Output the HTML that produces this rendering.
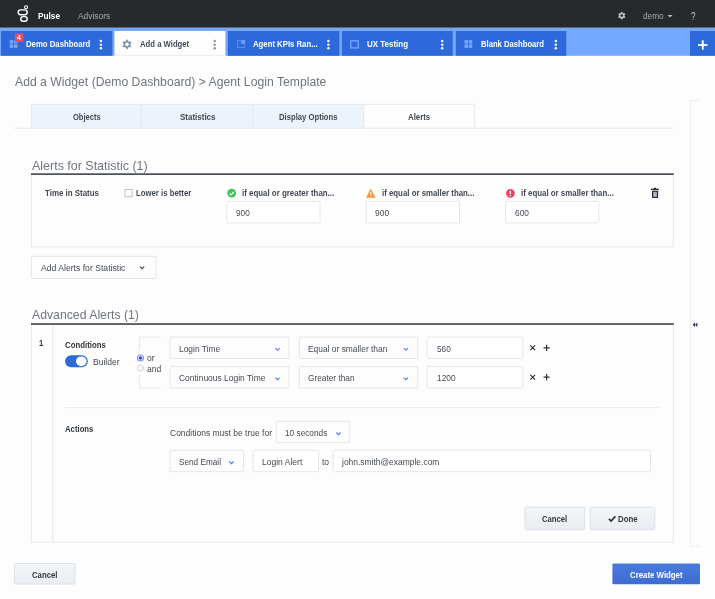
<!DOCTYPE html>
<html>
<head>
<meta charset="utf-8">
<title>Pulse - Add a Widget</title>
<style>
*{box-sizing:border-box;margin:0;padding:0}
html,body{width:715px;height:599px;overflow:hidden;background:#fdfdfd;font-family:"Liberation Sans",sans-serif;color:#444a52;font-size:9.2px}
#pg{position:absolute;left:-8px;top:-8px;width:731px;height:615px;overflow:hidden;background:#fdfdfd;filter:blur(0.45px)}
#in{position:absolute;left:8px;top:8px;width:715px;height:599px}
#shapes{position:absolute;left:0;top:0;width:715px;height:599px;overflow:visible}
.t{position:absolute;white-space:nowrap;transform-origin:0 50%}
</style>
</head>
<body>
<div id="pg"><div id="in">
<svg id="shapes" width="715" height="599" viewBox="0 0 715 599">
  <defs>
    <g id="kebab"><circle cx="0" cy="0" r="1.25"/><circle cx="0" cy="3.6" r="1.25"/><circle cx="0" cy="7.2" r="1.25"/></g>
    <path id="chev" d="M0.4 0.2L2.5 2.3L4.6 0.2" fill="none" stroke-width="1.1"/>
    <g id="grid"><rect x="0" y="0" width="3.5" height="3.5"/><rect x="4.3" y="0" width="3.5" height="3.5"/><rect x="0" y="4.3" width="3.5" height="3.5"/><rect x="4.3" y="4.3" width="3.5" height="3.5"/></g>
    <linearGradient id="cw" x1="0" y1="0" x2="0" y2="1"><stop offset="0" stop-color="#4a7ade"/><stop offset="1" stop-color="#3d6cd2"/></linearGradient>
    <linearGradient id="bt" x1="0" y1="0" x2="0" y2="1"><stop offset="0" stop-color="#f3f5f8"/><stop offset="1" stop-color="#e9edf1"/></linearGradient>
  </defs>

  <!-- top nav -->
  <rect x="-8" y="-8" width="731" height="35.8" fill="#262a2d"/>
  <g fill="none" stroke="#ffffff" stroke-width="1.45">
    <rect x="18.2" y="9.85" width="9.0" height="4.8" rx="2.4"/>
    <rect x="20.8" y="16.6" width="6.4" height="4.6" rx="2.3"/>
    <circle cx="26.1" cy="7.2" r="1.5" stroke-width="1.1"/>
  </g>
  <!-- gear -->
  <g transform="translate(621.8 15.6)">
    <polygon points="0.00,-3.85 1.20,-2.08 3.33,-1.92 2.40,0.00 3.33,1.92 1.20,2.08 0.00,3.85 -1.20,2.08 -3.33,1.92 -2.40,0.00 -3.33,-1.93 -1.20,-2.08" fill="#c3d0e2" stroke="#c3d0e2" stroke-width="0.4" stroke-linejoin="round"/>
    <circle r="1.35" fill="#262a2d"/>
  </g>
  <path d="M667.4 15.1h5.2l-2.6 2.5z" fill="#b4bac0"/>

  <!-- dashboard tab bar -->
  <rect x="-8" y="27.8" width="731" height="28" fill="#75a8ff"/>
  <g fill="#2e69db">
    <rect x="1" y="31" width="111.4" height="24.8"/>
    <rect x="227.8" y="31" width="111.6" height="24.8"/>
    <rect x="341.9" y="31" width="110.8" height="24.8"/>
    <rect x="455.8" y="31" width="110.5" height="24.8"/>
    <rect x="690" y="31" width="33" height="24.8"/>
  </g>
  <rect x="114.4" y="31" width="111" height="24.8" fill="#fdfdfd"/>
  <rect x="114.4" y="54.8" width="111" height="1" fill="#eef0f4"/>
  <!-- plus -->
  <rect x="698" y="44.1" width="9.5" height="1.8" fill="#fff"/>
  <rect x="701.85" y="40.3" width="1.8" height="9.4" fill="#fff"/>
  <!-- tab icons -->
  <use href="#grid" x="9.65" y="40.05" fill="#75a6ff"/>
  <rect x="14.85" y="33.4" width="8.5" height="8.55" fill="#f04a5e"/>
  <use href="#grid" x="464.5" y="40.1" fill="#75a6ff"/>
  <path d="M241 40.5H237.5V47.4H244.7V44.2" fill="none" stroke="#5389f4" stroke-width="1.1"/>
  <rect x="241.2" y="40.1" width="3.9" height="3.7" fill="#6fa1ff"/>
  <rect x="350.7" y="40.8" width="7.6" height="7.1" fill="none" stroke="#6fa1ff" stroke-width="1.4"/>
  <!-- active tab gear -->
  <g transform="translate(127 44.4)">
    <polygon points="0.00,-4.90 1.48,-2.55 4.24,-2.45 2.95,0.00 4.24,2.45 1.48,2.55 0.00,4.90 -1.47,2.55 -4.24,2.45 -2.95,0.00 -4.24,-2.45 -1.48,-2.55" fill="#7b90af" stroke="#7b90af" stroke-width="0.5" stroke-linejoin="round"/>
    <circle r="1.8" fill="#fdfdfd"/>
  </g>
  <!-- kebabs -->
  <use href="#kebab" x="100.9" y="41.1" fill="#fff"/>
  <use href="#kebab" x="214.7" y="41.1" fill="#8d96a0"/>
  <use href="#kebab" x="328.4" y="41.1" fill="#fff"/>
  <use href="#kebab" x="442.2" y="41.1" fill="#fff"/>
  <use href="#kebab" x="555.8" y="41.1" fill="#fff"/>

  <!-- wizard tabs -->
  <rect x="31.4" y="104.3" width="332.2" height="23.9" fill="#edf3fb"/>
  <g fill="none" stroke="#e3e8f1" stroke-width="1">
    <path d="M14.5 128.2H673"/>
    <path d="M31.4 128.2V104.3H474.7V128.2"/>
    <path d="M141.5 104.3V128.2M252.7 104.3V128.2M363.6 104.3V128.2"/>
  </g>

  <!-- right collapsed panel -->
  <path d="M699.8 100.5H690.4V546.2H699.8" fill="none" stroke="#ebeef4" stroke-width="1"/>
  <path d="M695.0 322.6v4.5l-2.3-2.25zM697.4 322.6v4.5l-2.3-2.25z" fill="#2a3050"/>

  <!-- Alerts for statistic box -->
  <rect x="31.3" y="174" width="642" height="72.8" fill="none" stroke="#e4e8ef" stroke-width="1"/>
  <rect x="31" y="173.3" width="642.8" height="1.7" fill="#4b5057"/>
  <rect x="125" y="189.5" width="7.2" height="7.2" fill="#fff" stroke="#b9bec6" stroke-width="0.9"/>
  <g fill="#fff" stroke="#e1e6ee" stroke-width="1">
    <rect x="226.9" y="201.4" width="93.1" height="21.5" rx="1"/>
    <rect x="366.3" y="201.4" width="93.2" height="21.5" rx="1"/>
    <rect x="505.6" y="201.4" width="93.2" height="21.5" rx="1"/>
  </g>
  <!-- status icons -->
  <circle cx="231.7" cy="193.2" r="4.4" fill="#40c35b"/>
  <path d="M229.6 193.6l1.4 1.3 2.8-2.9" fill="none" stroke="#fff" stroke-width="1.1"/>
  <path d="M370.8 189.3l4.3 8.1h-8.6z" fill="#f99a38" stroke="#f99a38" stroke-width="0.7" stroke-linejoin="round"/>
  <rect x="370.2" y="191.9" width="1.2" height="2.5" fill="#fff"/><rect x="370.2" y="195.1" width="1.2" height="1.1" fill="#fff"/>
  <circle cx="510.4" cy="193.3" r="4.35" fill="#ea4466"/>
  <rect x="509.7" y="190.6" width="1.25" height="3.3" fill="#fff"/><rect x="509.7" y="194.8" width="1.25" height="1.25" fill="#fff"/>
  <!-- trash -->
  <g fill="#2b2d36">
    <rect x="651" y="188.7" width="7.9" height="1.4"/>
    <rect x="653.7" y="187.8" width="2.5" height="1.2" rx="0.4"/>
    <rect x="652" y="190.8" width="6.1" height="7.2" rx="0.5"/>
  </g>
  <rect x="653.2" y="191.9" width="3.7" height="5.0" fill="#b9a9c0"/>

  <!-- add alerts dropdown -->
  <rect x="31.3" y="256.3" width="124.7" height="22.2" rx="1" fill="#fdfdfd" stroke="#e1e6ee" stroke-width="1"/>
  <use href="#chev" x="139.6" y="266.4" stroke="#444a52"/>

  <!-- Advanced Alerts box -->
  <rect x="31.3" y="324" width="642" height="218.1" fill="none" stroke="#e4e8ef" stroke-width="1"/>
  <path d="M52.7 324V542" stroke="#e4e8ef" stroke-width="1"/>
  <rect x="31" y="323.2" width="642.8" height="1.7" fill="#4b5057"/>
  <!-- toggle -->
  <rect x="65.1" y="355.2" width="22.7" height="12" rx="6" fill="#2e69db"/>
  <ellipse cx="81.3" cy="361.3" rx="5.3" ry="4.85" fill="#fff"/>
  <!-- or / and -->
  <path d="M161 337.1H139.6V388H161" fill="none" stroke="#e4e8ef" stroke-width="1"/>
  <rect x="136" y="350.6" width="8" height="24.4" fill="#fdfdfd"/>
  <circle cx="140.5" cy="358.0" r="3.0" fill="#fff" stroke="#8794ee" stroke-width="1.1"/>
  <circle cx="140.5" cy="358.0" r="1.75" fill="#2b50e0"/>
  <circle cx="140.5" cy="368.25" r="3.0" fill="#fff" stroke="#c3c8d0" stroke-width="0.9"/>
  <!-- selects / inputs -->
  <g fill="#fdfdfd" stroke="#e1e6ee" stroke-width="1">
    <rect x="170" y="337.1" width="119" height="21.4" rx="1"/>
    <rect x="299.3" y="337.1" width="118.4" height="21.4" rx="1"/>
    <rect x="170" y="366.6" width="119" height="21.4" rx="1"/>
    <rect x="299.3" y="366.6" width="118.4" height="21.4" rx="1"/>
    <rect x="276.3" y="421.3" width="73.4" height="21.4" rx="1"/>
    <rect x="170" y="450.3" width="73.6" height="21.4" rx="1"/>
  </g>
  <g fill="#fff" stroke="#e1e6ee" stroke-width="1">
    <rect x="427" y="337.1" width="95.8" height="21.4" rx="1"/>
    <rect x="427" y="366.6" width="95.8" height="21.4" rx="1"/>
    <rect x="253.2" y="450.3" width="65.5" height="21.4" rx="1"/>
    <rect x="333.2" y="450.3" width="317.3" height="21.4" rx="1"/>
  </g>
  <g stroke="#4f78e6">
    <use href="#chev" x="275" y="348"/>
    <use href="#chev" x="403.4" y="348"/>
    <use href="#chev" x="275" y="377.4"/>
    <use href="#chev" x="403.4" y="377.4"/>
    <use href="#chev" x="336" y="432.3"/>
    <use href="#chev" x="229" y="461.3"/>
  </g>
  <!-- x and + -->
  <g stroke="#2e3237" stroke-width="1.2" fill="none">
    <path d="M530.3 345.4l4.8 4.8M535.1 345.4l-4.8 4.8"/>
    <path d="M543.5 347.8h6.2M546.6 344.7v6.2"/>
    <path d="M530.3 374.8l4.8 4.8M535.1 374.8l-4.8 4.8"/>
    <path d="M543.5 377.2h6.2M546.6 374.1v6.2"/>
  </g>
  <path d="M65.1 407.6H659" stroke="#e9ecf1" stroke-width="1"/>
  <!-- buttons -->
  <g fill="url(#bt)" stroke="#dce2e9" stroke-width="1">
    <rect x="525" y="507.1" width="59.8" height="22.6" rx="1.2"/>
    <rect x="590.2" y="507.1" width="64.6" height="22.6" rx="1.2"/>
    <rect x="14.4" y="563.5" width="60.6" height="20.6" rx="1.2"/>
  </g>
  <path d="M608.9 518.9l2.2 2.2 4.3-4.7" fill="none" stroke="#2e3237" stroke-width="1.7"/>
  <rect x="612.4" y="563.5" width="87.6" height="20.8" rx="1.2" fill="url(#cw)"/>
</svg>
<div class="t" style="left:17.1px;top:34px;font-size:6.8px;line-height:8px;color:#fff;font-weight:bold">4</div>
<div class="t" style="left:38.0px;top:10px;font-size:9.2px;line-height:12px;color:#ffffff;transform:scaleX(0.8974);font-weight:bold">Pulse</div>
<div class="t" style="left:78.0px;top:10px;font-size:9.2px;line-height:12px;color:#a3a9af;transform:scaleX(0.9139)">Advisors</div>
<div class="t" style="left:642.8px;top:10px;font-size:9.2px;line-height:12px;color:#a3a9af;transform:scaleX(0.9006)">demo</div>
<div class="t" style="left:691.4px;top:9px;font-size:10.6px;line-height:14px;color:#c6cbd0;transform:scaleX(0.7619)">?</div>
<div class="t" style="left:26.0px;top:38px;font-size:9.2px;line-height:12px;color:#ffffff;transform:scaleX(0.8452);font-weight:bold">Demo Dashboard</div>
<div class="t" style="left:139.7px;top:38px;font-size:9.2px;line-height:12px;color:#444a52;transform:scaleX(0.8392);font-weight:bold">Add a Widget</div>
<div class="t" style="left:253.4px;top:38px;font-size:9.2px;line-height:12px;color:#ffffff;transform:scaleX(0.8436);font-weight:bold">Agent KPIs Ran...</div>
<div class="t" style="left:367.0px;top:38px;font-size:9.2px;line-height:12px;color:#ffffff;transform:scaleX(0.8687);font-weight:bold">UX Testing</div>
<div class="t" style="left:481.0px;top:38px;font-size:9.2px;line-height:12px;color:#ffffff;transform:scaleX(0.8337);font-weight:bold">Blank Dashboard</div>
<div class="t" style="left:14.8px;top:73px;font-size:13.0px;line-height:17px;color:#70767d;transform:scaleX(0.9384)">Add a Widget (Demo Dashboard) &gt; Agent Login Template</div>
<div class="t" style="left:73.0px;top:111px;font-size:9.2px;line-height:12px;color:#444a52;transform:scaleX(0.8219);font-weight:bold">Objects</div>
<div class="t" style="left:179.6px;top:111px;font-size:9.2px;line-height:12px;color:#444a52;transform:scaleX(0.8688);font-weight:bold">Statistics</div>
<div class="t" style="left:279.0px;top:111px;font-size:9.2px;line-height:12px;color:#444a52;transform:scaleX(0.8363);font-weight:bold">Display Options</div>
<div class="t" style="left:408.4px;top:111px;font-size:9.2px;line-height:12px;color:#444a52;transform:scaleX(0.8523);font-weight:bold">Alerts</div>
<div class="t" style="left:31.5px;top:157px;font-size:13.0px;line-height:17px;color:#70767d;transform:scaleX(0.9590)">Alerts for Statistic (1)</div>
<div class="t" style="left:44.6px;top:187px;font-size:9.2px;line-height:12px;color:#444a52;transform:scaleX(0.8621);font-weight:bold">Time in Status</div>
<div class="t" style="left:136.0px;top:187px;font-size:9.2px;line-height:12px;color:#444a52;transform:scaleX(0.8461);font-weight:bold">Lower is better</div>
<div class="t" style="left:242.0px;top:187px;font-size:9.2px;line-height:12px;color:#444a52;transform:scaleX(0.8599);font-weight:bold">if equal or greater than...</div>
<div class="t" style="left:381.7px;top:187px;font-size:9.2px;line-height:12px;color:#444a52;transform:scaleX(0.8536);font-weight:bold">if equal or smaller than...</div>
<div class="t" style="left:521.0px;top:187px;font-size:9.2px;line-height:12px;color:#444a52;transform:scaleX(0.8582);font-weight:bold">if equal or smaller than...</div>
<div class="t" style="left:236.0px;top:207px;font-size:9.2px;line-height:12px;color:#444a52;transform:scaleX(0.8994)">900</div>
<div class="t" style="left:375.2px;top:207px;font-size:9.2px;line-height:12px;color:#444a52;transform:scaleX(0.9189)">900</div>
<div class="t" style="left:514.6px;top:207px;font-size:9.2px;line-height:12px;color:#444a52;transform:scaleX(0.9059)">600</div>
<div class="t" style="left:40.6px;top:262px;font-size:9.2px;line-height:12px;color:#444a52;transform:scaleX(0.9391)">Add Alerts for Statistic</div>
<div class="t" style="left:31.5px;top:306px;font-size:13.0px;line-height:17px;color:#70767d;transform:scaleX(0.9422)">Advanced Alerts (1)</div>
<div class="t" style="left:39.0px;top:337px;font-size:9.2px;line-height:12px;color:#33383d;transform:scaleX(0.8390);font-weight:bold">1</div>
<div class="t" style="left:65.3px;top:339px;font-size:9.2px;line-height:12px;color:#33383d;transform:scaleX(0.8503);font-weight:bold">Conditions</div>
<div class="t" style="left:93.0px;top:356px;font-size:9.2px;line-height:12px;color:#444a52;transform:scaleX(0.9263)">Builder</div>
<div class="t" style="left:147.0px;top:352px;font-size:9.2px;line-height:12px;color:#444a52;transform:scaleX(0.9300)">or</div>
<div class="t" style="left:147.0px;top:363px;font-size:9.2px;line-height:12px;color:#444a52;transform:scaleX(0.9255)">and</div>
<div class="t" style="left:179.4px;top:343px;font-size:9.2px;line-height:12px;color:#444a52;transform:scaleX(0.9143)">Login Time</div>
<div class="t" style="left:307.6px;top:343px;font-size:9.2px;line-height:12px;color:#444a52;transform:scaleX(0.9145)">Equal or smaller than</div>
<div class="t" style="left:436.9px;top:343px;font-size:9.2px;line-height:12px;color:#444a52;transform:scaleX(0.8994)">560</div>
<div class="t" style="left:178.9px;top:372px;font-size:9.2px;line-height:12px;color:#444a52;transform:scaleX(0.9193)">Continuous Login Time</div>
<div class="t" style="left:307.6px;top:372px;font-size:9.2px;line-height:12px;color:#444a52;transform:scaleX(0.9032)">Greater than</div>
<div class="t" style="left:436.9px;top:372px;font-size:9.2px;line-height:12px;color:#444a52;transform:scaleX(0.9094)">1200</div>
<div class="t" style="left:65.1px;top:423px;font-size:9.2px;line-height:12px;color:#33383d;transform:scaleX(0.8427);font-weight:bold">Actions</div>
<div class="t" style="left:170.0px;top:427px;font-size:9.2px;line-height:12px;color:#444a52;transform:scaleX(0.9246)">Conditions must be true for</div>
<div class="t" style="left:285.2px;top:427px;font-size:9.2px;line-height:12px;color:#444a52;transform:scaleX(0.9000)">10 seconds</div>
<div class="t" style="left:178.9px;top:456px;font-size:9.2px;line-height:12px;color:#444a52;transform:scaleX(0.8939)">Send Email</div>
<div class="t" style="left:262.0px;top:456px;font-size:9.2px;line-height:12px;color:#444a52;transform:scaleX(0.9281)">Login Alert</div>
<div class="t" style="left:322.4px;top:456px;font-size:9.2px;line-height:12px;color:#444a52;transform:scaleX(0.9255)">to</div>
<div class="t" style="left:342.2px;top:456px;font-size:9.2px;line-height:12px;color:#444a52;transform:scaleX(0.9202)">john.smith@example.com</div>
<div class="t" style="left:542.1px;top:513px;font-size:9.2px;line-height:12px;color:#33383d;transform:scaleX(0.8361);font-weight:bold">Cancel</div>
<div class="t" style="left:618.2px;top:513px;font-size:9.2px;line-height:12px;color:#33383d;transform:scaleX(0.8490);font-weight:bold">Done</div>
<div class="t" style="left:32.0px;top:569px;font-size:9.2px;line-height:12px;color:#33383d;transform:scaleX(0.8427);font-weight:bold">Cancel</div>
<div class="t" style="left:629.9px;top:569px;font-size:9.2px;line-height:12px;color:#ffffff;transform:scaleX(0.8525);font-weight:bold">Create Widget</div>
</div></div>
</body>
</html>
